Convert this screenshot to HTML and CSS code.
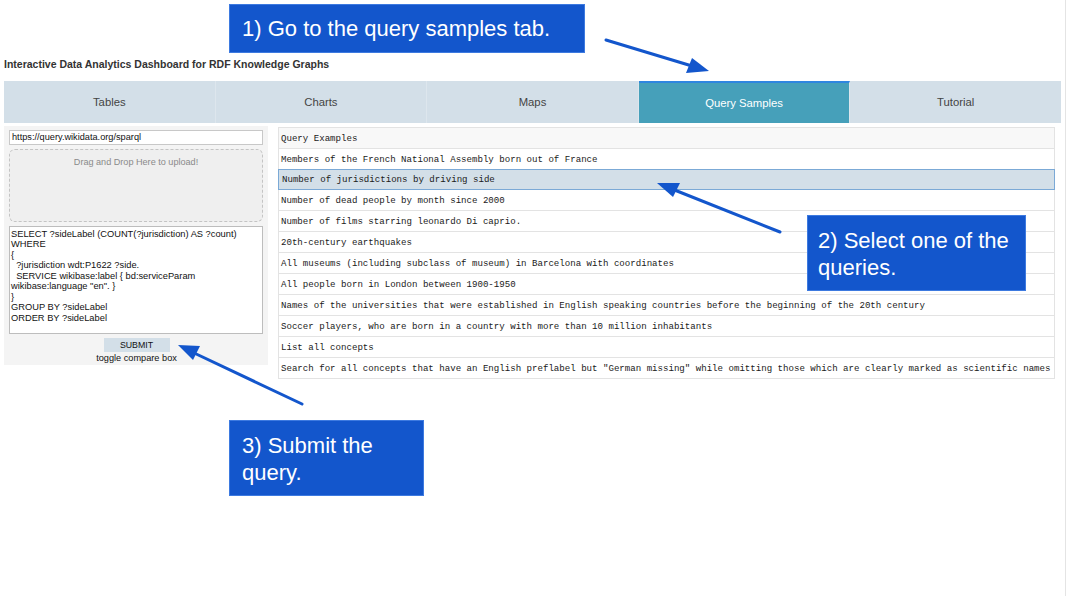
FILE: index.html
```html
<!DOCTYPE html>
<html>
<head>
<meta charset="utf-8">
<link rel="stylesheet" href="styles.css">
</head>
<body>
<div class="page">
  <h1 class="title">Interactive Data Analytics Dashboard for RDF Knowledge Graphs</h1>
  <nav class="tabs">
    <div class="tab">Tables</div>
    <div class="tab">Charts</div>
    <div class="tab">Maps</div>
    <div class="tab active">Query Samples</div>
    <div class="tab">Tutorial</div>
  </nav>
  <div class="main">
    <aside class="side">
      <div class="url">https://query.wikidata.org/sparql</div>
      <div class="drop">Drag and Drop Here to upload!</div>
      <div class="query">SELECT ?sideLabel (COUNT(?jurisdiction) AS ?count)
WHERE
{
  ?jurisdiction wdt:P1622 ?side.
  SERVICE wikibase:label { bd:serviceParam
wikibase:language "en". }
}
GROUP BY ?sideLabel
ORDER BY ?sideLabel</div>
      <div class="actions">
        <div class="submit">SUBMIT</div>
        <div class="toggle">toggle compare box</div>
      </div>
    </aside>
    <div class="list">
      <div class="row head">Query Examples</div>
      <div class="row">Members of the French National Assembly born out of France</div>
      <div class="row selected">Number of jurisdictions by driving side</div>
      <div class="row">Number of dead people by month since 2000</div>
      <div class="row">Number of films starring leonardo Di caprio.</div>
      <div class="row">20th-century earthquakes</div>
      <div class="row">All museums (including subclass of museum) in Barcelona with coordinates</div>
      <div class="row">All people born in London between 1900-1950</div>
      <div class="row">Names of the universities that were established in English speaking countries before the beginning of the 20th century</div>
      <div class="row">Soccer players, who are born in a country with more than 10 million inhabitants</div>
      <div class="row">List all concepts</div>
      <div class="row">Search for all concepts that have an English preflabel but "German missing" while omitting those which are clearly marked as scientific names</div>
    </div>
  </div>
</div>

<div class="note note1">1) Go to the query samples tab.</div>
<div class="note note2">2) Select one of the queries.</div>
<div class="note note3">3) Submit the query.</div>

<svg class="arrows" width="1068" height="596" viewBox="0 0 1068 596">
  <g stroke="#1356cc" stroke-width="3" stroke-linecap="round">
    <line x1="606" y1="40" x2="692" y2="66"/>
    <line x1="780" y1="232" x2="672" y2="189"/>
    <line x1="302" y1="404" x2="192" y2="352"/>
  </g>
  <g fill="#1356cc">
    <polygon points="709,71 686,73 692,58"/>
    <polygon points="657,183 680,183 673,197"/>
    <polygon points="178,345 200,346 193,360"/>
  </g>
</svg>
</body>
</html>
```

FILE: styles.css
```css
html, body {
  margin: 0;
  padding: 0;
  background: #fff;
}
body {
  width: 1068px;
  height: 596px;
  position: relative;
  overflow: hidden;
  font-family: "Liberation Sans", Arial, sans-serif;
}
.page {
  width: 1066px;
  height: 596px;
  border-right: 1px solid #e4e4e4;
  padding: 57px 0 0 4px;
  box-sizing: border-box;
}
.title {
  margin: 0;
  font-size: 10.5px;
  line-height: 14px;
  font-weight: bold;
  color: #333;
}
.tabs {
  margin-top: 10px;
  display: flex;
  width: 1057px;
  height: 42px;
  background: #d3dfe8;
}
.tab {
  flex: 1;
  display: flex;
  align-items: center;
  justify-content: center;
  font-size: 11.3px;
  color: #444;
  border-right: 1px solid #dde6ed;
}
.tab:last-child { border-right: none; }
.tab.active {
  background: #46a0ba;
  color: #fff;
  border-top: 2px solid #2f86e0;
  box-sizing: border-box;
}
.main {
  display: flex;
  align-items: flex-start;
  margin-top: 3px;
}
.side {
  width: 264px;
  height: 239px;
  background: #f4f4f4;
  padding: 4px 5px 0 5px;
  box-sizing: border-box;
  display: flex;
  flex-direction: column;
}
.url {
  height: 15px;
  box-sizing: border-box;
  border: 1px solid #c8c8c8;
  background: #fff;
  font-size: 9.2px;
  line-height: 13px;
  padding-left: 2px;
  color: #111;
}
.drop {
  margin-top: 4px;
  height: 73px;
  box-sizing: border-box;
  border: 1px dashed #c4c4c4;
  border-radius: 6px;
  background: #efefef;
  font-size: 9.1px;
  color: #8a8a8a;
  text-align: center;
  padding-top: 7px;
}
.query {
  margin-top: 4px;
  height: 109px;
  box-sizing: border-box;
  border: 1px solid #bdbdbd;
  background: #fff;
  font-size: 9.3px;
  line-height: 10.5px;
  padding: 2px 1px;
  white-space: pre;
  color: #111;
  overflow: hidden;
}
.actions {
  display: flex;
  flex-direction: column;
  align-items: center;
  margin-top: 4px;
  margin-left: 1px;
}
.submit {
  width: 66px;
  height: 14px;
  background: #d3dfe8;
  font-size: 8.8px;
  line-height: 14px;
  text-align: center;
  color: #111;
}
.toggle {
  font-size: 9.2px;
  line-height: 13px;
  color: #111;
}
.list {
  margin-left: 10px;
  margin-top: 1px;
  width: 777px;
  border: 1px solid #e3e3e3;
  border-bottom: none;
  box-sizing: border-box;
}
.row {
  height: 21px;
  box-sizing: border-box;
  border-bottom: 1px solid #e3e3e3;
  font-family: "Liberation Mono", "Courier New", monospace;
  font-size: 9.1px;
  line-height: 21px;
  padding-left: 2px;
  color: #1a1a1a;
  white-space: nowrap;
  overflow: hidden;
  background: #fff;
}
.row.head { background: #f8f8f8; }
.row.selected {
  background: #d3dfe8;
  border: 1px solid #7ba9d6;
  margin: -1px -1px 0 -1px;
  padding-left: 3px;
  line-height: 20px;
}
.note {
  position: absolute;
  background: #1356cc;
  border: 1px solid #3d7ae0;
  color: #fff;
  font-family: "Liberation Sans", Arial, sans-serif;
  font-size: 22px;
  line-height: 27px;
  box-sizing: border-box;
}
.note1 {
  left: 229px;
  top: 4px;
  width: 356px;
  height: 49px;
  padding: 10px 0 0 12px;
}
.note2 {
  left: 807px;
  top: 215px;
  width: 219px;
  height: 76px;
  padding: 11px 10px 0 10px;
}
.note3 {
  left: 229px;
  top: 420px;
  width: 195px;
  height: 76px;
  padding: 11px 10px 0 12px;
}
.arrows {
  position: absolute;
  left: 0;
  top: 0;
  pointer-events: none;
}
```
